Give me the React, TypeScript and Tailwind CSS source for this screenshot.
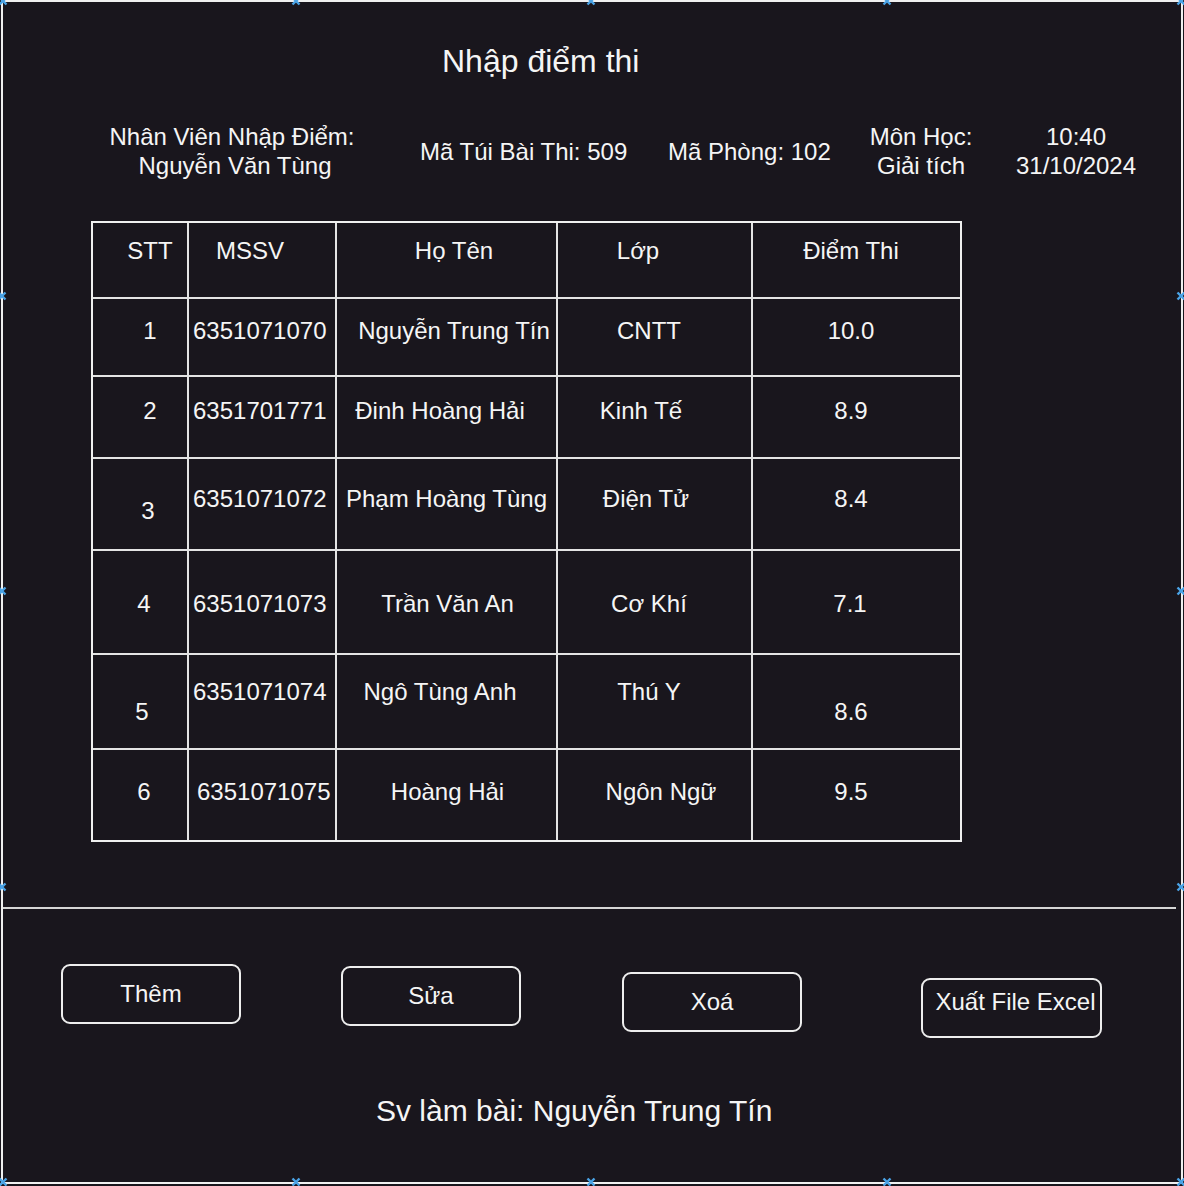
const font = { fontFamily: '"Liberation Sans", Arial, sans-serif' };

type Cell = { t: string; c: string };

const rows: { h: string; cells: Cell[] }[] = [
  {
    h: "h-[76px]",
    cells: [
      { t: "STT", c: "pt-[14px] justify-center pl-[20px]" },
      { t: "MSSV", c: "pt-[14px] justify-center pr-[24px]" },
      { t: "Họ Tên", c: "pt-[14px] justify-center pl-[15px]" },
      { t: "Lớp", c: "pt-[14px] justify-center pr-[33px]" },
      { t: "Điểm Thi", c: "pt-[14px] justify-center pr-[11px]" },
    ],
  },
  {
    h: "h-[78px]",
    cells: [
      { t: "1", c: "pt-[18px] justify-center pl-[20px]" },
      { t: "6351071070", c: "pt-[18px] justify-start pl-[4px]" },
      { t: "Nguyễn Trung Tín", c: "pt-[18px] justify-center pl-[15px]" },
      { t: "CNTT", c: "pt-[18px] justify-center pr-[11px]" },
      { t: "10.0", c: "pt-[18px] justify-center pr-[11px]" },
    ],
  },
  {
    h: "h-[82px]",
    cells: [
      { t: "2", c: "pt-[20px] justify-center pl-[20px]" },
      { t: "6351701771", c: "pt-[20px] justify-start pl-[4px]" },
      { t: "Đinh Hoàng Hải", c: "pt-[20px] justify-center pr-[13px]" },
      { t: "Kinh Tế", c: "pt-[20px] justify-center pr-[27px]" },
      { t: "8.9", c: "pt-[20px] justify-center pr-[11px]" },
    ],
  },
  {
    h: "h-[92px]",
    cells: [
      { t: "3", c: "pt-[38px] justify-center pl-[16px]" },
      { t: "6351071072", c: "pt-[26px] justify-start pl-[4px]" },
      { t: "Phạm Hoàng Tùng", c: "pt-[26px] justify-center" },
      { t: "Điện Tử", c: "pt-[26px] justify-center pr-[17px]" },
      { t: "8.4", c: "pt-[26px] justify-center pr-[11px]" },
    ],
  },
  {
    h: "h-[104px]",
    cells: [
      { t: "4", c: "pt-[39px] justify-center pl-[8px]" },
      { t: "6351071073", c: "pt-[39px] justify-start pl-[4px]" },
      { t: "Trần Văn An", c: "pt-[39px] justify-center pl-[2px]" },
      { t: "Cơ Khí", c: "pt-[39px] justify-center pr-[11px]" },
      { t: "7.1", c: "pt-[39px] justify-center pr-[13px]" },
    ],
  },
  {
    h: "h-[95px]",
    cells: [
      { t: "5", c: "pt-[43px] justify-center pl-[4px]" },
      { t: "6351071074", c: "pt-[23px] justify-start pl-[4px]" },
      { t: "Ngô Tùng Anh", c: "pt-[23px] justify-center pr-[13px]" },
      { t: "Thú Y", c: "pt-[23px] justify-center pr-[11px]" },
      { t: "8.6", c: "pt-[43px] justify-center pr-[11px]" },
    ],
  },
  {
    h: "h-[90px]",
    cells: [
      { t: "6", c: "pt-[28px] justify-center pl-[8px]" },
      { t: "6351071075", c: "pt-[28px] justify-start pl-[8px]" },
      { t: "Hoàng Hải", c: "pt-[28px] justify-center pl-[2px]" },
      { t: "Ngôn Ngữ", c: "pt-[28px] justify-center pl-[13px]" },
      { t: "9.5", c: "pt-[28px] justify-center pr-[11px]" },
    ],
  },
];

const colW = ["w-[96px]", "w-[148px]", "w-[221px]", "w-[195px]", "w-[207px]"];

const handles = [
  [3, 1], [296, 1], [591, 1], [887, 1], [1181, 1],
  [2, 296], [2, 591], [2, 887],
  [1181, 296], [1181, 591], [1181, 887],
  [3, 1182], [296, 1182], [591, 1182], [887, 1182], [1181, 1182],
];

function Handle({ x, y }: { x: number; y: number }) {
  return (
    <svg
      className="absolute"
      style={{ left: x - 5, top: y - 5 }}
      width="10"
      height="10"
      viewBox="0 0 10 10"
    >
      <path d="M1.5 1.5L8.5 8.5M8.5 1.5L1.5 8.5" stroke="#4aa3e6" strokeWidth="2.4" />
    </svg>
  );
}

function Button({ label, cls }: { label: string; cls: string }) {
  return (
    <div
      className={`h-[60px] border-2 border-[#eeeeee] rounded-[9px] flex items-center justify-center whitespace-nowrap ${cls}`}
    >
      {label}
    </div>
  );
}

export default function App() {
  return (
    <div
      className="relative w-[1184px] h-[1186px] bg-[#19161d] text-[#f5f5f5] text-[24px] leading-[1.2] overflow-hidden"
      style={font}
    >
      <div className="ml-[1px] w-[1182px] h-[1184px] border-2 border-[#f0f0f0]">
        {/* title */}
        <div className="mt-[40px] pl-[439px] text-[32px] leading-[1.2]">Nhập điểm thi</div>

        {/* info row */}
        <div className="mt-[43px] flex items-center whitespace-nowrap">
          <div className="ml-[99px] w-[260px] text-center">
            <div>Nhân Viên Nhập Điểm:</div>
            <div className="pl-[6px]">Nguyễn Văn Tùng</div>
          </div>
          <div className="ml-[58px] w-[207px]">Mã Túi Bài Thi: 509</div>
          <div className="ml-[41px] w-[162px]">Mã Phòng: 102</div>
          <div className="ml-[31px] w-[120px] text-center">
            <div>Môn Học:</div>
            <div>Giải tích</div>
          </div>
          <div className="ml-[25px] w-[140px] text-center">
            <div>10:40</div>
            <div>31/10/2024</div>
          </div>
        </div>

        {/* table */}
        <div className="mt-[40px] ml-[88px] w-[871px] border-2 border-[#f0f0f0] flex flex-col">
          {rows.map((r, ri) => (
            <div
              key={ri}
              className={`flex ${r.h} ${ri < rows.length - 1 ? "border-b-2 border-[#e4e4e4]" : ""}`}
            >
              {r.cells.map((c, ci) => (
                <div
                  key={ci}
                  className={`${colW[ci]} flex items-start whitespace-nowrap ${c.c} ${
                    ci < 4 ? "border-r-2 border-[#e4e4e4]" : ""
                  }`}
                >
                  {c.t}
                </div>
              ))}
            </div>
          ))}
        </div>

        {/* separator */}
        <div className="mt-[65px] h-[2px] w-[1173px] bg-[#d6d6d6]" />

        {/* buttons */}
        <div className="mt-[55px] flex items-start">
          <Button label="Thêm" cls="ml-[58px] w-[180px]" />
          <Button label="Sửa" cls="ml-[100px] w-[180px] mt-[2px]" />
          <Button label="Xoá" cls="ml-[101px] w-[180px] mt-[8px]" />
          <Button label="Xuất File Excel" cls="ml-[119px] w-[181px] mt-[14px] pb-[12px] pl-[8px]" />
        </div>

        {/* footer */}
        <div className="mt-[55px] ml-[373px] text-[30px] leading-[1.2] whitespace-nowrap">
          Sv làm bài: Nguyễn Trung Tín
        </div>
      </div>

      {handles.map(([x, y], i) => (
        <Handle key={i} x={x} y={y} />
      ))}
    </div>
  );
}
